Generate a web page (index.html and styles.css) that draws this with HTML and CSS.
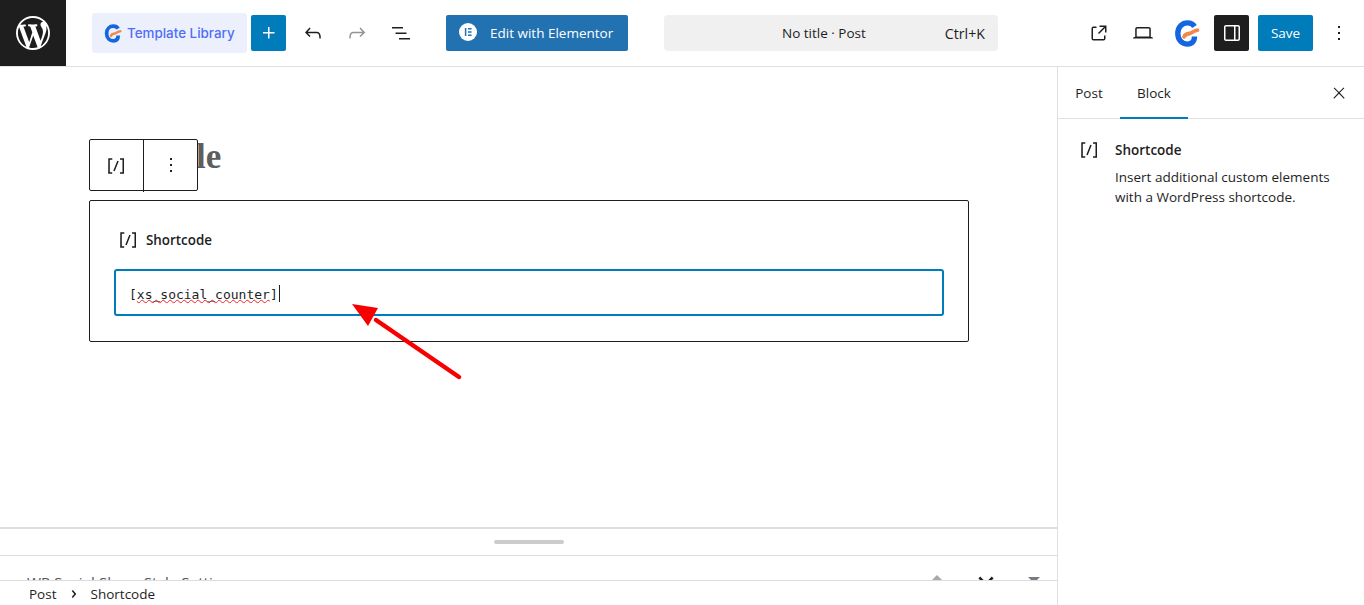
FILE: index.html
```html
<!DOCTYPE html>
<html lang="en">
<head>
<meta charset="utf-8">
<title>Edit Post</title>
<link rel="stylesheet" href="styles.css">
</head>
<body>
<svg class="defs" width="0" height="0" aria-hidden="true">
  <symbol id="gicon" viewBox="0 0 26 27">
    <path d="M20.500 6.500C19 4 16 2.900 13.500 2.900 8.500 2.900 3.800 6.500 3.800 13.500S8.500 24.100 13.500 24.100c3.500 0 7-2 7-7.600" fill="none" stroke="#1466e0" stroke-width="5.400"/>
    <path d="M10 16.800c1-2.600 3.500-3 5.500-3.300 3-.5 4-3 8-3.300" fill="none" stroke="#f08a4b" stroke-width="3.800" stroke-linecap="round"/>
  </symbol>
  <symbol id="shortcode" viewBox="0 0 24 24">
    <path d="M16 4.200v1.500h2.500v12.500H16v1.500h4V4.200h-4zM4.200 19.800h4v-1.500H5.800V5.800h2.500V4.200h-4l-.1 15.600zm5.100-3.100l1.400.6 4-10-1.400-.6-4 10z"/>
  </symbol>
  <symbol id="dots" viewBox="0 0 24 24">
    <path d="M13 19h-2v-2h2v2zm0-6h-2v-2h2v2zm0-6h-2V5h2v2z"/>
  </symbol>
</svg>

<header class="topbar">
  <a class="wp-logo">
    <svg class="wp-mark" viewBox="0 0 20 20"><path d="M20 10c0-5.510-4.490-10-10-10C4.480 0 0 4.490 0 10c0 5.520 4.480 10 10 10 5.510 0 10-4.480 10-10zM7.780 15.370L4.370 6.220c.55-.02 1.170-.08 1.170-.08.5-.06.44-1.130-.06-1.110 0 0-1.450.11-2.370.11-.18 0-.37 0-.58-.01C4.120 2.690 6.870 1.110 10 1.110c2.330 0 4.450.87 6.050 2.340-.68-.11-1.650.39-1.650 1.580 0 .74.45 1.360.9 2.100.35.61.55 1.360.55 2.460 0 1.490-1.400 5-1.400 5l-3.030-8.370c.54-.02.82-.17.82-.17.5-.05.44-1.250-.06-1.220 0 0-1.440.12-2.380.12-.87 0-2.330-.12-2.330-.12-.5-.03-.56 1.200-.06 1.220l.92.08 1.260 3.410zM17.410 10c.24-.64.74-1.870.43-4.250.7 1.290 1.050 2.710 1.050 4.250 0 3.290-1.730 6.240-4.400 7.780.97-2.590 1.940-5.200 2.920-7.780zM6.100 18.090C3.120 16.650 1.110 13.530 1.110 10c0-1.300.23-2.480.72-3.590C3.250 10.300 4.670 14.200 6.100 18.090zm4.030-6.630l2.580 6.980c-.86.29-1.760.45-2.710.45-.79 0-1.570-.11-2.290-.33.81-2.380 1.620-4.740 2.420-7.100z"/></svg>
  </a>
  <div class="tools">
    <button class="tpl-btn"><svg class="tpl-g"><use href="#gicon"/></svg><span>Template Library</span></button>
    <button class="icon-btn primary"><svg class="i24" viewBox="0 0 24 24"><path d="M11 12.500V17.500H12.500V12.500H17.500V11H12.500V6H11V11H6V12.500H11Z"/></svg></button>
    <button class="icon-btn plain undo"><svg class="i24" viewBox="0 0 24 24"><path d="M18.300 11.700c-.6-.6-1.400-.9-2.300-.9H6.700l2.900-3.300-1.100-1-4.500 5L8.500 16l1-1-2.700-2.700H16c.5 0 .9.2 1.300.5 1 1 1 3.400 1 4.500v.3h1.500v-.2c0-1.500 0-4.300-1.500-5.700z"/></svg></button>
    <button class="icon-btn plain redo"><svg class="i24" viewBox="0 0 24 24"><path d="M15.600 6.500l-1.100 1 2.900 3.300H8c-.9 0-1.700.3-2.300.9-1.400 1.500-1.400 4.200-1.400 5.600v.2h1.500v-.3c0-1.100 0-3.500 1-4.500.3-.3.7-.5 1.300-.5h9.200L14.500 15l1.100 1.100 4.600-4.600-4.600-5z"/></svg></button>
    <button class="icon-btn plain list"><svg class="i24" viewBox="0 0 24 24"><path d="M3 6h11v1.500H3V6zm3.500 5.500h11V13h-11v-1.500zM21 17H10v1.500h11V17z"/></svg></button>
    <button class="elementor-btn"><span class="el-badge"><svg viewBox="0 0 20 20"><path d="M6.500 5.500h1.700v9H6.500zM10 5.500h4v1.700h-4zM10 9.150h4v1.700h-4zM10 12.800h4v1.700h-4z"/></svg></span><span>Edit with Elementor</span></button>
    <div class="command-bar"><span class="cmd-title">No title · Post</span><span class="cmd-key">Ctrl+K</span></div>
  </div>
  <div class="actions">
    <button class="icon-btn plain"><svg class="i24" viewBox="0 0 24 24"><path d="M19.500 4.500h-7V6h4.440l-5.970 5.970 1.060 1.060L18 7.060v4.440h1.500v-7Zm-13 1a2 2 0 0 0-2 2v10a2 2 0 0 0 2 2h10a2 2 0 0 0 2-2v-3H17v3a.5.5 0 0 1-.5.5h-10a.5.5 0 0 1-.5-.5v-10a.5.5 0 0 1 .5-.5h3V5.500h-3Z"/></svg></button>
    <button class="icon-btn plain"><svg class="i24" viewBox="0 0 24 24"><path d="M20.500 16h-.7V8c0-1.100-.9-2-2-2H6.200c-1.100 0-2 .9-2 2v8h-.7c-.8 0-1.500.7-1.500 1.500h20c0-.8-.7-1.500-1.500-1.500zM5.700 8c0-.3.2-.5.500-.5h11.600c.3 0 .5.200.5.500v7.600H5.700V8z"/></svg></button>
    <button class="icon-btn plain g-btn"><svg class="g-big"><use href="#gicon"/></svg></button>
    <button class="icon-btn dark"><svg class="i24" viewBox="0 0 24 24"><path d="M18 4H6c-1.100 0-2 .9-2 2v12c0 1.100.9 2 2 2h12c1.100 0 2-.9 2-2V6c0-1.100-.9-2-2-2zm-4 14.500H6c-.3 0-.5-.2-.5-.5V6c0-.3.2-.5.500-.5h8v13zm4.500-.5c0 .3-.2.500-.5.500h-2.500v-13H18c.3 0 .5.200.5.500v12z"/></svg></button>
    <button class="save-btn">Save</button>
    <button class="icon-btn plain more"><svg class="i24"><use href="#dots"/></svg></button>
  </div>
</header>

<div class="workspace">
  <main class="content">
    <section class="editor">
      <h1 class="post-title">Add title</h1>
      <div class="block-toolbar">
        <button class="tb-btn first"><svg class="i24"><use href="#shortcode"/></svg></button>
        <button class="tb-btn"><svg class="i24"><use href="#dots"/></svg></button>
      </div>
      <div class="sc-block">
        <div class="sc-label"><svg class="i24"><use href="#shortcode"/></svg><span>Shortcode</span></div>
        <div class="sc-input"><span class="sc-text">[<span class="squiggle">xs_social_counter</span>]</span><span class="caret"></span></div>
      </div>
      <svg class="arrow" viewBox="0 0 120 90"><path d="M110 77 27 20" stroke="#f90000" stroke-width="4.500" stroke-linecap="round" fill="none"/><path d="M3 4 29 8 19 26z" fill="#f90000"/></svg>
    </section>
    <div class="resizer"><span class="grip"></span></div>
    <section class="metabox">
      <span class="mb-title">WP Social Share Style Settings</span>
      <div class="mb-controls">
        <span class="tri up"></span>
        <svg class="mb-chev" viewBox="0 0 24 24"><path d="M4 9 12 17 20 9" fill="none" stroke="#1e1e1e" stroke-width="3"/></svg>
        <span class="tri down"></span>
      </div>
    </section>
    <footer class="crumbs">
      <span>Post</span>
      <svg class="crumb-sep" viewBox="0 0 24 24"><path d="M10.860 8.040 14.280 12.030 10.860 16.020 9.720 15.040 12.300 12.030 9.720 9.020Z"/></svg>
      <span>Shortcode</span>
    </footer>
  </main>
  <aside class="sidebar">
    <div class="tabs">
      <button class="tab">Post</button>
      <button class="tab active">Block</button>
      <button class="icon-btn plain close"><svg class="close-icon" viewBox="0 0 24 24"><path d="M13 11.800l6.100-6.300-1-1-6.100 6.200-6.100-6.200-1 1 6.100 6.300-6.500 6.700 1 1 6.500-6.600 6.500 6.600 1-1z"/></svg></button>
    </div>
    <div class="card">
      <svg class="i24 card-icon"><use href="#shortcode"/></svg>
      <div class="card-body">
        <h2>Shortcode</h2>
        <p>Insert additional custom elements with a WordPress shortcode.</p>
      </div>
    </div>
  </aside>
</div>
</body>
</html>
```
FILE: styles.css
```css
* { box-sizing: border-box; }
html, body { margin: 0; height: 100%; overflow: hidden; }
body {
  display: flex;
  flex-direction: column;
  height: 605px;
  background: #fff;
  color: #1e1e1e;
  font-family: "Open Sans", "Noto Sans", sans-serif;
  font-size: 13.500px;
}
button { font: inherit; border: 0; background: none; padding: 0; color: inherit; }
.defs { position: absolute; }
.i24 { width: 24px; height: 24px; fill: currentColor; display: block; }

.topbar {
  flex: none;
  height: 67px;
  display: flex;
  align-items: center;
  border-bottom: 1px solid #e0e0e0;
}
.wp-logo {
  width: 66px;
  height: 66px;
  background: #1e1e1e;
  display: flex;
  align-items: center;
  justify-content: center;
}
.wp-mark { width: 34px; height: 34px; fill: #fff; }
.tools { display: flex; align-items: center; margin-left: 26px; }
.tpl-btn {
  width: 155px;
  height: 40px;
  display: flex;
  align-items: center;
  gap: 5px;
  padding-left: 12px;
  background: #ecf0fd;
  border-radius: 3px;
  color: #4f6ef7;
  font-family: Inter, sans-serif;
  font-size: 13.400px;
  font-weight: 500;
  white-space: nowrap;
}
.tpl-g { width: 18px; height: 19px; }
.icon-btn {
  width: 35px;
  height: 36px;
  display: flex;
  align-items: center;
  justify-content: center;
  border-radius: 2px;
}
.primary { background: #007cba; color: #fff; margin-left: 4px; }
.undo { margin-left: 9px; }
.redo { margin-left: 9px; color: #949494; }
.list { margin-left: 9px; }
.elementor-btn {
  width: 182px;
  height: 36px;
  margin-left: 28px;
  display: flex;
  align-items: center;
  gap: 13px;
  padding-left: 13px;
  border-radius: 2px;
  background: #2271b1;
  color: #fff;
  white-space: nowrap;
}
.el-badge {
  width: 18px;
  height: 18px;
  margin-top: -3px;
  border-radius: 50%;
  background: #fff;
  display: flex;
}
.el-badge svg { width: 18px; height: 18px; fill: #2271b1; }
.command-bar {
  width: 334px;
  height: 36px;
  margin-left: 36px;
  padding: 0 13px 0 118px;
  display: flex;
  align-items: center;
  justify-content: space-between;
  background: #f0f0f0;
  border-radius: 4px;
}
.cmd-key { font-size: 14.200px; }
.actions { display: flex; align-items: center; margin-left: auto; }
.actions .icon-btn { width: 36px; }
.actions .icon-btn + .icon-btn { margin-left: 8px; }
.g-big { width: 26px; height: 27px; }
.actions .dark { background: #1e1e1e; color: #fff; width: 35px; margin-left: 9px; }
.actions .g-btn { margin-right: 1px; }
.save-btn {
  width: 55px;
  height: 36px;
  margin-left: 9px;
  background: #007cba;
  color: #fff;
  border-radius: 2px;
}
.more { margin-left: 8px; margin-right: 7px; }

.workspace { flex: 1; min-height: 0; display: flex; }
.content {
  flex: 1;
  min-width: 0;
  display: flex;
  flex-direction: column;
  border-right: 1px solid #e0e0e0;
}
.editor { position: relative; flex: 1; min-height: 0; padding: 71px 89px 0; }
.post-title {
  margin: 0;
  height: 62px;
  line-height: 38px;
  font-family: "Liberation Serif", serif;
  font-size: 35px;
  font-weight: 700;
  color: #5e5e5e;
  padding-left: 1px;
}
.block-toolbar {
  position: absolute;
  left: 89px;
  top: 72px;
  width: 109px;
  height: 52px;
  display: flex;
  background: #fff;
  border: 1px solid #1e1e1e;
  border-radius: 2px;
}
.tb-btn { flex: 1; display: flex; align-items: center; justify-content: center; }
.tb-btn.first { flex: none; width: 54px; padding-right: 2px; border-right: 1px solid #1e1e1e; height: 52px; }
.sc-block {
  width: 880px;
  height: 142px;
  padding: 27px 24px 0;
  border: 1px solid #1e1e1e;
  border-radius: 2px;
}
.sc-label {
  display: flex;
  align-items: center;
  gap: 6px;
  height: 24px;
  padding-left: 2px;
  font-size: 13.400px;
  font-weight: 600;
}
.sc-input {
  width: 830px;
  height: 47px;
  margin-top: 17px;
  padding: 3px 0 0 13px;
  display: flex;
  align-items: center;
  border: 2px solid #007cba;
  border-radius: 3px;
  font-family: "DejaVu Sans Mono", "Liberation Mono", monospace;
  font-size: 13px;
}
.squiggle {
  text-decoration: underline wavy #f42020 1.200px;
  text-decoration-skip-ink: none;
  text-underline-offset: 0;
}
.caret { width: 1px; height: 17px; background: #1e1e1e; margin: -2px 0 0 1px; }
.arrow { position: absolute; left: 349px; top: 233px; width: 120px; height: 90px; }

.resizer {
  flex: none;
  height: 29px;
  border-top: 2px solid #ddd;
  border-bottom: 1px solid #ddd;
  display: flex;
  align-items: center;
  justify-content: center;
}
.grip { width: 70px; height: 4px; border-radius: 2px; background: #ccc; }
.metabox {
  flex: none;
  height: 24px;
  overflow: hidden;
  position: relative;
  padding: 16px 0 0 27px;
  line-height: 20px;
  font-size: 15.200px;
  font-weight: 500;
  color: #50575e;
}
.mb-controls { position: absolute; left: 931px; top: 16px; display: flex; align-items: flex-start; }
.tri { width: 0; height: 0; border-left: 6px solid transparent; border-right: 6px solid transparent; }
.tri.up { border-bottom: 6px solid #a7aaad; margin-top: 3px; }
.tri.down { border-top: 6px solid #787c82; margin: 5px 0 0 32px; }
.mb-chev { width: 20px; height: 20px; margin-left: 33px; margin-top: -2px; }

.crumbs {
  flex: none;
  height: 25px;
  display: flex;
  align-items: center;
  padding: 1px 0 0 29px;
  border-top: 1px solid #ddd;
}
.crumb-sep { width: 24px; height: 24px; margin: 0 5px 0 5px; fill: #1e1e1e; }

.sidebar { flex: none; width: 306px; }
.tabs {
  height: 52px;
  display: flex;
  align-items: stretch;
  position: relative;
  border-bottom: 1px solid #e0e0e0;
}
.tab { width: 62px; }
.tab.active { width: 68px; box-shadow: inset 0 -2px 0 #007cba; margin-bottom: -1px; }
.close { position: absolute; right: 7px; top: 8px; padding-right: 2px; }
.close-icon { width: 18px; height: 18px; fill: currentColor; }
.card { display: flex; gap: 14px; padding: 19px 16px 0 19px; }
.card-body { padding-top: 2px; }
.card h2 { margin: 0; font-size: 13.500px; line-height: 20px; font-weight: 600; }
.card p { margin: 7px 0 0; line-height: 20px; width: 232px; }
```
